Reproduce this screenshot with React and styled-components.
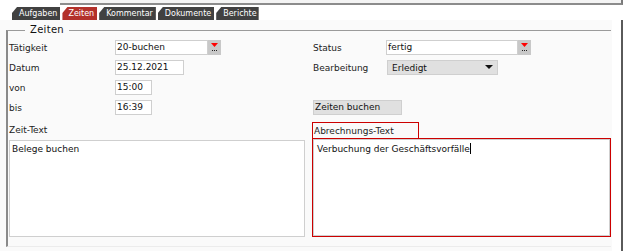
import React from 'react';
import styled, { createGlobalStyle } from 'styled-components';

const Global = createGlobalStyle`
  html, body { margin: 0; padding: 0; background: #fff; }
  body { font-family: "DejaVu Sans", "Liberation Sans", sans-serif; font-size: 9px; color: #111; }
  * { box-sizing: border-box; }
`;

const Page = styled.div`
  width: 624px;
  height: 251px;
  overflow: hidden;
  background: #fff;
  display: flex;
  flex-direction: column;
`;

const TopStrip = styled.div`
  margin-left: 60px;
  width: 563px;
  height: 5px;
  flex: none;
  background: #f4f4f4;
  border-right: 2px solid #7a7a7a;
  border-bottom: 2px solid #8c8c8c;
`;

const TabBar = styled.div`
  display: flex;
  gap: 2px;
  margin-top: 2px;
  padding-left: 12px;
  height: 13px;
  flex: none;
`;

const Tab = styled.div`
  height: 13px;
  line-height: 13px;
  padding: 0 ${p => p.$pr}px 0 ${p => p.$pl}px;
  font-size: 8px;
  letter-spacing: 0;
  color: #fff;
  background: ${p => (p.$active ? '#b3312b' : '#414141')};
  clip-path: polygon(0 100%, 0 6px, 5px 0, 100% 0, 100% 100%);
  white-space: nowrap;
`;

const Content = styled.div`
  flex: 1;
  display: flex;
  width: 623px;
  border-right: 2px solid #5a5a5a;
  padding-right: 9px;
`;

const Panel = styled.div`
  flex: 1;
  background: #fafafa;
  padding-top: 4px;
`;

const Group = styled.fieldset`
  margin: 0 0 0 6px;
  width: 605px;
  padding: 0 0 9px 1px;
  border: none;
  border-top: 1px solid #9a9a9a;
  border-left: 2px solid #8a8a8a;
  border-bottom: 1px solid #ececec;
`;

const Legend = styled.legend`
  margin-left: 16px;
  padding: 0 5px;
  font-size: 10px;
  letter-spacing: 0.3px;
  color: #111;
  line-height: 12px;
`;

const Form = styled.div`
  display: grid;
  grid-template-columns: 303px 299px;
  row-gap: 7px;
  padding-top: 4px;
`;

const Fields = styled.div`
  display: grid;
  grid-template-columns: ${p => p.$label}px 1fr;
  grid-template-rows: repeat(4, 15px);
  row-gap: 5px;
  padding-left: ${p => p.$indent || 0}px;
  align-items: center;
`;

const Label = styled.div`
  color: #222;
  white-space: nowrap;
`;

const Combo = styled.div`
  display: flex;
  height: 15px;
`;

const Input = styled.div`
  width: ${p => p.$w}px;
  height: 15px;
  line-height: 13px;
  padding-left: ${p => p.$pad ?? 1}px;
  background: #fff;
  border: 1px solid #cfcfcf;
  white-space: nowrap;
  color: #111;
`;

const PickBtn = styled.div`
  width: 13px;
  height: 15px;
  background: #c8c8c8;
  display: flex;
  align-items: flex-start;
  justify-content: center;
  padding-top: 3px;
`;

const Select = styled.div`
  margin-left: 1px;
  width: 111px;
  height: 15px;
  display: flex;
  align-items: center;
  justify-content: space-between;
  padding: 0 4px 0 4px;
  background: #e0e0e0;
  border: 1px solid #cfcfcf;
  color: #111;
`;

const ActionButton = styled.div`
  grid-column: 1 / span 2;
  grid-row: ${p => p.$row};
  width: 89px;
  height: 15px;
  line-height: 13px;
  padding-left: 1px;
  background: #e0e0e0;
  border: 1px solid #cfcfcf;
  color: #111;
  white-space: nowrap;
`;

const TextBlock = styled.div`
  display: flex;
  flex-direction: column;
  height: 115px;
  width: ${p => p.$w}px;
`;

const PlainLabel = styled.div`
  height: 18px;
  line-height: 17px;
  color: #222;
`;

const TabLabel = styled.div`
  width: 107px;
  height: 16px;
  line-height: 17px;
  padding-left: 1px;
  border: 1px solid #cc0000;
  border-bottom: none;
  color: #222;
`;

const Box = styled.div`
  flex: 1;
  background: #fff;
  border: 1px solid #cfcfcf;
  padding: ${p => p.$pad};
  color: #111;
  white-space: nowrap;
`;

const Focused = styled.div`
  flex: 1;
  display: flex;
  border: 1px solid #cc0000;
`;

const Caret = styled.span`
  display: inline-block;
  width: 1px;
  height: 11px;
  background: #000;
  vertical-align: -2px;
`;

const PickIcon = () => (
  <svg width="9" height="10" viewBox="0 0 9 10">
    <polygon points="1,0 8,0 4.5,4" fill="#ff0000" />
    <rect x="2" y="7" width="1" height="1" fill="#222" />
    <rect x="4" y="7" width="1" height="1" fill="#222" />
    <rect x="6" y="7" width="1" height="1" fill="#222" />
  </svg>
);

const Caret8 = () => (
  <svg width="8" height="5" viewBox="0 0 8 5">
    <polygon points="0,0 8,0 4,4" fill="#111" />
  </svg>
);

const tabs = [
  { label: 'Aufgaben', pl: 7, pr: 3 },
  { label: 'Zeiten', pl: 6, pr: 3, active: true },
  { label: 'Kommentar', pl: 7, pr: 3 },
  { label: 'Dokumente', pl: 7, pr: 3 },
  { label: 'Berichte', pl: 7, pr: 2 },
];

export default function App() {
  return (
    <>
      <Global />
      <Page>
        <TopStrip />
        <TabBar>
          {tabs.map(t => (
            <Tab key={t.label} $active={t.active} $pl={t.pl} $pr={t.pr}>
              {t.label}
            </Tab>
          ))}
        </TabBar>
        <Content>
          <Panel>
            <Group>
              <Legend>Zeiten</Legend>
              <Form>
                <Fields $label={106}>
                  <Label>Tätigkeit</Label>
                  <Combo>
                    <Input $w={93}>20-buchen</Input>
                    <PickBtn><PickIcon /></PickBtn>
                  </Combo>
                  <Label>Datum</Label>
                  <Input $w={69}>25.12.2021</Input>
                  <Label>von</Label>
                  <Input $w={37}>15:00</Input>
                  <Label>bis</Label>
                  <Input $w={37}>16:39</Input>
                </Fields>
                <Fields $label={73} $indent={1}>
                  <Label>Status</Label>
                  <Combo>
                    <Input $w={132} $pad={1}>fertig</Input>
                    <PickBtn><PickIcon /></PickBtn>
                  </Combo>
                  <Label>Bearbeitung</Label>
                  <Select>
                    <span>Erledigt</span>
                    <Caret8 />
                  </Select>
                  <ActionButton $row={4}>Zeiten buchen</ActionButton>
                </Fields>
                <TextBlock $w={296}>
                  <PlainLabel>Zeit-Text</PlainLabel>
                  <Box $pad="3px 2px">Belege buchen</Box>
                </TextBlock>
                <TextBlock $w={299}>
                  <TabLabel>Abrechnungs-Text</TabLabel>
                  <Focused>
                    <Box $pad="3px 3px">
                      Verbuchung der Geschäftsvorfälle<Caret />
                    </Box>
                  </Focused>
                </TextBlock>
              </Form>
            </Group>
          </Panel>
        </Content>
      </Page>
    </>
  );
}
